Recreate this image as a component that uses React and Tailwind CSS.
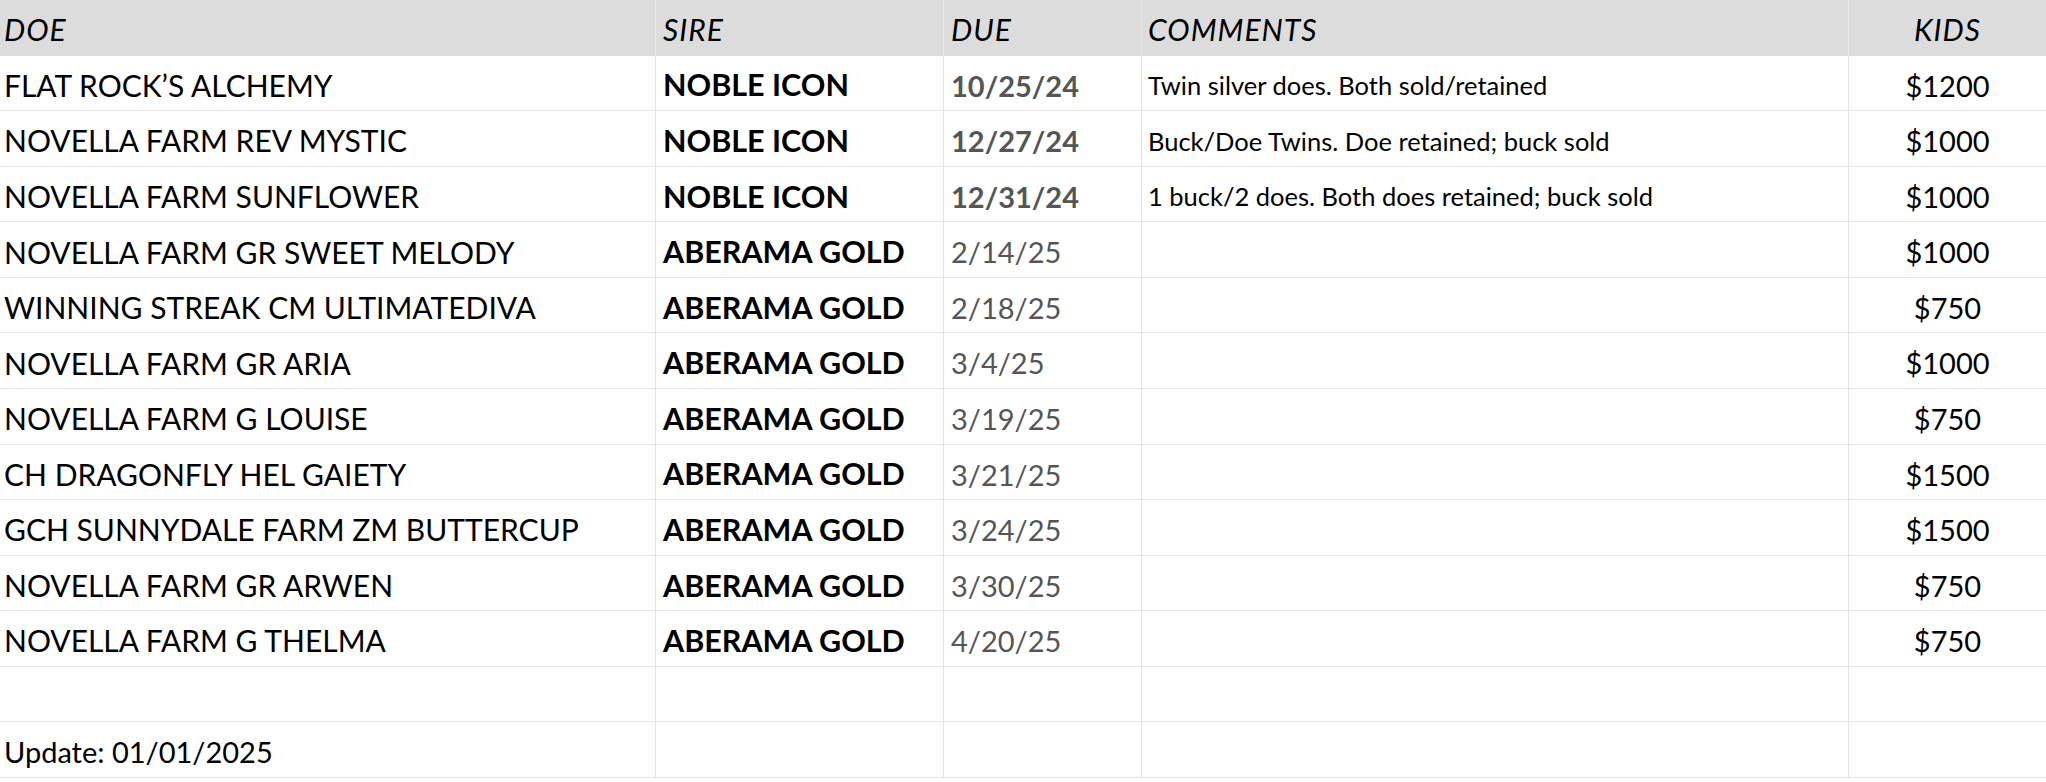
const ROWS = [
  { doe: 'FLAT ROCK’S ALCHEMY', sire: 'NOBLE ICON', due: '10/25/24', bold: true, comment: 'Twin silver does. Both sold/retained', kids: '$1200' },
  { doe: 'NOVELLA FARM REV MYSTIC', sire: 'NOBLE ICON', due: '12/27/24', bold: true, comment: 'Buck/Doe Twins. Doe retained; buck sold', kids: '$1000' },
  { doe: 'NOVELLA FARM SUNFLOWER', sire: 'NOBLE ICON', due: '12/31/24', bold: true, comment: '1 buck/2 does. Both does retained; buck sold', kids: '$1000' },
  { doe: 'NOVELLA FARM GR SWEET MELODY', sire: 'ABERAMA GOLD', due: '2/14/25', comment: '', kids: '$1000' },
  { doe: 'WINNING STREAK CM ULTIMATEDIVA', sire: 'ABERAMA GOLD', due: '2/18/25', comment: '', kids: '$750' },
  { doe: 'NOVELLA FARM GR ARIA', sire: 'ABERAMA GOLD', due: '3/4/25', comment: '', kids: '$1000' },
  { doe: 'NOVELLA FARM G LOUISE', sire: 'ABERAMA GOLD', due: '3/19/25', comment: '', kids: '$750' },
  { doe: 'CH DRAGONFLY HEL GAIETY', sire: 'ABERAMA GOLD', due: '3/21/25', comment: '', kids: '$1500' },
  { doe: 'GCH SUNNYDALE FARM ZM BUTTERCUP', sire: 'ABERAMA GOLD', due: '3/24/25', comment: '', kids: '$1500' },
  { doe: 'NOVELLA FARM GR ARWEN', sire: 'ABERAMA GOLD', due: '3/30/25', comment: '', kids: '$750' },
  { doe: 'NOVELLA FARM G THELMA', sire: 'ABERAMA GOLD', due: '4/20/25', comment: '', kids: '$750' },
];

// shared cell frame
const cell = 'flex items-center h-[55.57px] pt-[5px] border-b border-r border-[#e3e3e3] overflow-hidden whitespace-nowrap';
const head = 'flex items-center h-[55.57px] pt-[4px] bg-[#dcdcdc] border-r border-[#e6e6e6] italic text-[30px] tracking-[1px] text-black';

export default function App() {
  return (
    <div className="w-[2046px] h-[782px] bg-white font-['Lato',sans-serif] text-black">
      <div className="grid grid-cols-[656px_288px_198px_707px_197px]">
        {/* ── Header ── */}
        <div className={`${head} pl-[4px]`}>DOE</div>
        <div className={`${head} pl-[7px]`}>SIRE</div>
        <div className={`${head} pl-[7px]`}>DUE</div>
        <div className={`${head} pl-[6px]`}>COMMENTS</div>
        <div className={`${head} justify-center border-r-0`}>KIDS</div>

        {/* ── Rows ── */}
        {ROWS.map((r) => (
          <div key={r.doe} className="contents">
            <div className={`${cell} pl-[4px] text-[30px]`}>{r.doe}</div>
            <div className={`${cell} pl-[7px] text-[30.5px] font-bold`}>{r.sire}</div>
            <div className={`${cell} pl-[7px] text-[29px] text-[#555555] ${r.bold ? 'font-bold' : ''}`}>{r.due}</div>
            <div className={`${cell} pl-[6px] text-[25.5px]`}>{r.comment}</div>
            <div className={`${cell} justify-center text-[29px] border-r-0`}>{r.kids}</div>
          </div>
        ))}

        {/* ── Empty row ── */}
        <div className={cell} />
        <div className={cell} />
        <div className={cell} />
        <div className={cell} />
        <div className={`${cell} border-r-0`} />

        {/* ── Footer ── */}
        <div className={`${cell} pl-[4px] text-[29px]`}>Update: 01/01/2025</div>
        <div className={cell} />
        <div className={cell} />
        <div className={cell} />
        <div className={`${cell} border-r-0`} />
      </div>
    </div>
  );
}
